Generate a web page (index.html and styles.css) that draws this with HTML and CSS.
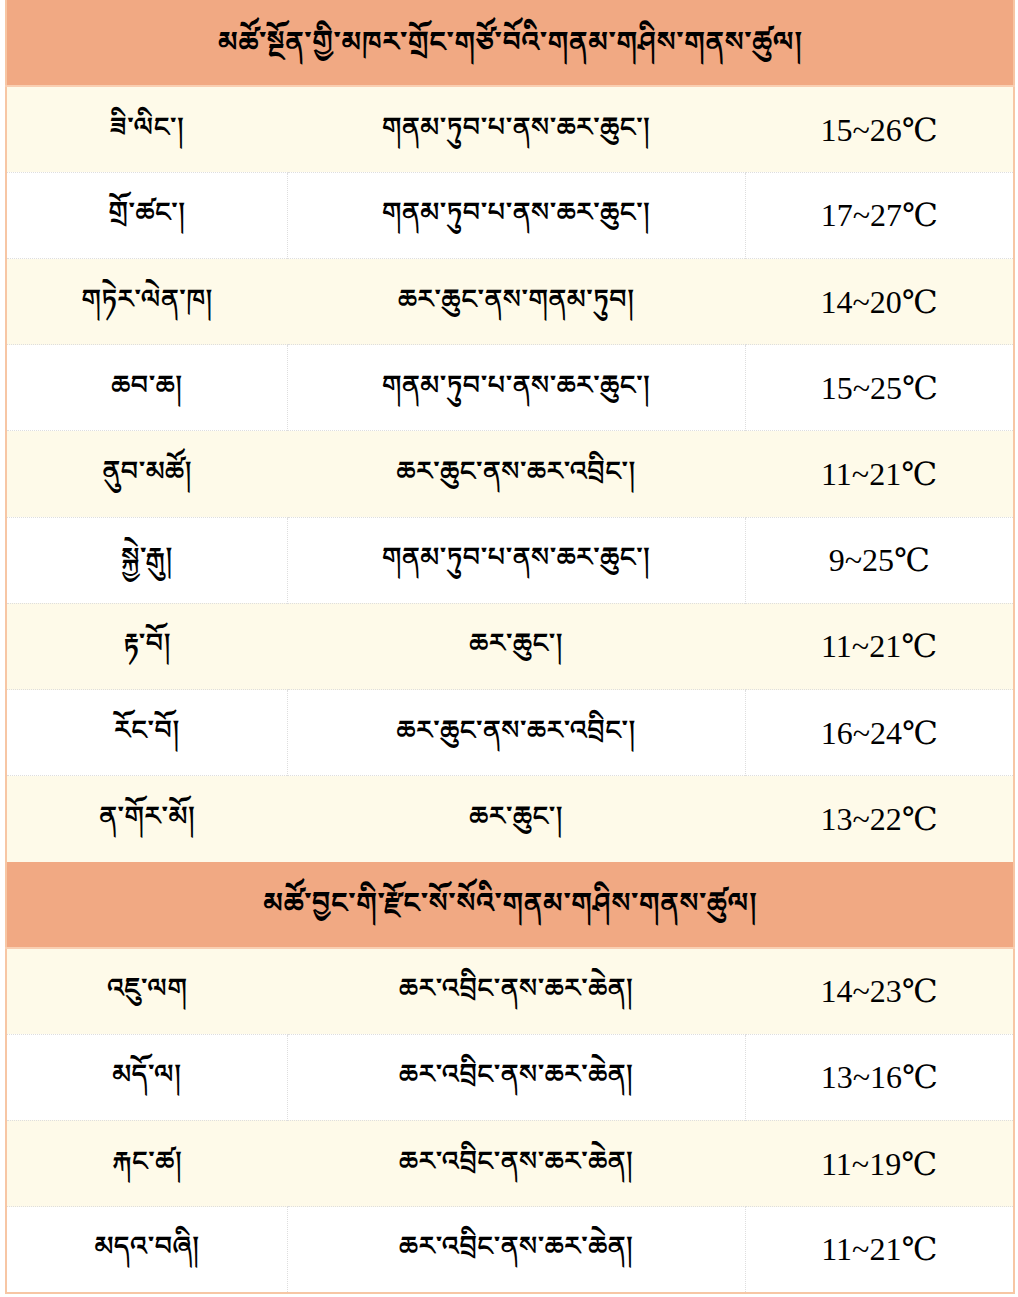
FILE: index.html
```html
<!DOCTYPE html>
<html lang="bo">
<head>
<meta charset="utf-8">
<title>གནམ་གཤིས་གནས་ཚུལ།</title>
<link rel="stylesheet" href="styles.css">
</head>
<body>
<table class="weather">
  <colgroup>
    <col class="c-city">
    <col class="c-desc">
    <col class="c-temp">
  </colgroup>
  <tbody>
    <tr class="head"><td colspan="3">མཚོ་སྔོན་གྱི་མཁར་གྲོང་གཙོ་བོའི་གནམ་གཤིས་གནས་ཚུལ།</td></tr>
    <tr class="odd"><td>ཟི་ལིང་།</td><td>གནམ་ཏུབ་པ་ནས་ཆར་ཆུང་།</td><td class="temp">15~26℃</td></tr>
    <tr class="even"><td>གྲོ་ཚང་།</td><td>གནམ་ཏུབ་པ་ནས་ཆར་ཆུང་།</td><td class="temp">17~27℃</td></tr>
    <tr class="odd"><td>གཏེར་ལེན་ཁ།</td><td>ཆར་ཆུང་ནས་གནམ་ཏུབ།</td><td class="temp">14~20℃</td></tr>
    <tr class="even"><td>ཆབ་ཆ།</td><td>གནམ་ཏུབ་པ་ནས་ཆར་ཆུང་།</td><td class="temp">15~25℃</td></tr>
    <tr class="odd"><td>ནུབ་མཚོ།</td><td>ཆར་ཆུང་ནས་ཆར་འབྲིང་།</td><td class="temp">11~21℃</td></tr>
    <tr class="even"><td>སྐྱེ་རྒུ།</td><td>གནམ་ཏུབ་པ་ནས་ཆར་ཆུང་།</td><td class="temp">9~25℃</td></tr>
    <tr class="odd"><td>རྟ་བོ།</td><td>ཆར་ཆུང་།</td><td class="temp">11~21℃</td></tr>
    <tr class="even"><td>རོང་བོ།</td><td>ཆར་ཆུང་ནས་ཆར་འབྲིང་།</td><td class="temp">16~24℃</td></tr>
    <tr class="odd"><td>ན་གོར་མོ།</td><td>ཆར་ཆུང་།</td><td class="temp">13~22℃</td></tr>
    <tr class="head"><td colspan="3">མཚོ་བྱང་གི་རྫོང་སོ་སོའི་གནམ་གཤིས་གནས་ཚུལ།</td></tr>
    <tr class="odd"><td>འཇུ་ལག</td><td>ཆར་འབྲིང་ནས་ཆར་ཆེན།</td><td class="temp">14~23℃</td></tr>
    <tr class="even"><td>མདོ་ལ།</td><td>ཆར་འབྲིང་ནས་ཆར་ཆེན།</td><td class="temp">13~16℃</td></tr>
    <tr class="odd"><td>རྐང་ཚ།</td><td>ཆར་འབྲིང་ནས་ཆར་ཆེན།</td><td class="temp">11~19℃</td></tr>
    <tr class="even"><td>མདའ་བཞི།</td><td>ཆར་འབྲིང་ནས་ཆར་ཆེན།</td><td class="temp">11~21℃</td></tr>
  </tbody>
</table>
</body>
</html>
```

FILE: styles.css
```css
html, body {
  margin: 0;
  padding: 0;
  background: #ffffff;
}

body {
  padding: 0 5px;
}

.weather {
  width: 1008px;
  border-collapse: collapse;
  table-layout: fixed;
  border-left: 2px solid #f7c6a4;
  border-right: 2px solid #f7c6a4;
  border-bottom: 2px solid #f7c6a4;
  font-family: "Noto Sans Tibetan", "Noto Serif Tibetan", "Jomolhari", "Tibetan Machine Uni", "Microsoft Himalaya", "Liberation Serif", serif;
  color: #000;
}

.c-city { width: 281px; }
.c-desc { width: 458px; }
.c-temp { width: 269px; }

.weather td {
  height: 86.2px;
  padding: 8px 0 0;
  text-align: center;
  vertical-align: middle;
  font-size: 27px;
  line-height: 44px;
  font-weight: 600;
  box-sizing: border-box;
  border-top: 1px dotted #dedede;
}

.head td {
  background: #f1a983;
  font-size: 28px;
  font-weight: bold;
  padding-top: 14px;
  border-top: none;
  border-bottom: 2px solid #f9cfb2;
}

.odd td {
  background: #fefae9;
}

.even td {
  background: #ffffff;
}

.even td + td {
  border-left: 1px dotted #dedede;
}

.weather td.temp {
  font-family: "Liberation Serif", "DejaVu Serif", serif;
  font-size: 32px;
  font-weight: normal;
  padding-top: 0;
}
```
